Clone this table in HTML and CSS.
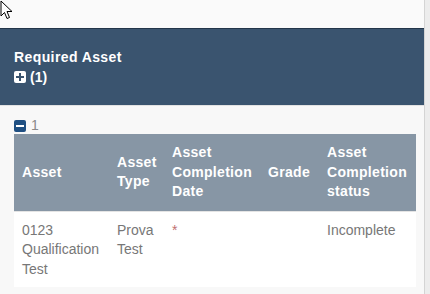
FILE: index.html
```html
<!DOCTYPE html>
<html lang="en">
<head>
    <meta charset="UTF-8">
    <meta name="viewport" content="width=device-width, initial-scale=1.0">
    <title>Required Asset</title>
    <link rel="stylesheet" href="styles.css">
</head>
<body>
    <div class="page">
        <div class="top-space"></div>

        <div class="panel-head">
            <div class="panel-title">Required Asset</div>
            <div class="panel-count">
                <span class="toggle plus"></span>
                (1)
            </div>
        </div>

        <div class="panel-body">
            <div class="group-label">
                <span class="toggle minus"></span>
                1
            </div>
            <table class="asset-table">
                <colgroup>
                    <col style="width: 95px">
                    <col style="width: 55px">
                    <col style="width: 96px">
                    <col style="width: 59px">
                    <col style="width: 97px">
                </colgroup>
                <thead>
                    <tr>
                        <th>Asset</th>
                        <th>Asset Type</th>
                        <th>Asset Completion Date</th>
                        <th>Grade</th>
                        <th>Asset Completion status</th>
                    </tr>
                </thead>
                <tbody>
                    <tr>
                        <td>0123 Qualification Test</td>
                        <td>Prova Test</td>
                        <td><span class="required">*</span></td>
                        <td></td>
                        <td>Incomplete</td>
                    </tr>
                </tbody>
            </table>
        </div>
    </div>
    <div class="side-strip"></div>

    <svg class="cursor" width="14" height="20" viewBox="0 0 14 20">
        <path d="M1 1 L1 16 L4.5 12.5 L7 18.5 L9.5 17.5 L7 11.5 L12 11.5 Z" fill="#fff" stroke="#000" stroke-width="1"/>
    </svg>
</body>
</html>
```

FILE: styles.css
```css
body {
    margin: 0;
    padding: 0;
    font-family: "Liberation Sans", Arial, sans-serif;
    background-color: #f9f9f9;
    display: flex;
    height: 100vh;
    overflow: hidden;
}

.page {
    width: 424px;
    border-right: 1px solid #d4d4d4;
    flex-shrink: 0;
    display: flex;
    flex-direction: column;
}

.side-strip {
    flex: 1;
    background-color: #ececec;
}

.top-space {
    height: 28px;
    background-color: #fafafa;
}

.panel-head {
    background-color: #3a546f;
    border-top: 1px solid #233549;
    padding: 18px 14px 18px;
    color: #ffffff;
    height: 40px;
}

.panel-title {
    font-size: 14px;
    font-weight: bold;
    letter-spacing: 0.4px;
    line-height: 20px;
}

.panel-count {
    display: flex;
    align-items: center;
    gap: 4px;
    font-size: 14px;
    font-weight: bold;
    line-height: 20px;
}

.toggle {
    display: inline-block;
    width: 12px;
    height: 12px;
    border-radius: 2px;
    position: relative;
}

.toggle::before,
.toggle::after {
    content: "";
    position: absolute;
    left: 2px;
    top: 5px;
    width: 8px;
    height: 2px;
}

.toggle.plus {
    background-color: #ffffff;
}

.toggle.plus::before,
.toggle.plus::after {
    background-color: #3a546f;
}

.toggle.plus::after {
    left: 5px;
    top: 2px;
    width: 2px;
    height: 8px;
}

.toggle.minus {
    background-color: #1f4f82;
}

.toggle.minus::before {
    background-color: #ffffff;
}

.toggle.minus::after {
    display: none;
}

.panel-body {
    flex: 1;
    border-top: 1px solid #e2e2e2;
    padding: 11px 8px 0 14px;
    background-color: #f8f8f8;
}

.group-label {
    display: flex;
    align-items: center;
    gap: 5px;
    font-size: 14px;
    color: #8a8a8a;
    line-height: 17px;
}

.asset-table {
    width: 402px;
    table-layout: fixed;
    border-collapse: collapse;
    font-size: 14px;
    line-height: 19.5px;
}

.asset-table th {
    background-color: #8796a5;
    color: #ffffff;
    text-align: left;
    vertical-align: middle;
    letter-spacing: 0.3px;
    padding: 9px 8px;
    height: 58px;
}

.asset-table td {
    background-color: #ffffff;
    color: #777777;
    vertical-align: top;
    padding: 9px 8px 8px;
    border-top: 1px solid #e4e4e4;
}

.required {
    color: #c07070;
}

.cursor {
    position: absolute;
    left: 0;
    top: 0;
}
```
